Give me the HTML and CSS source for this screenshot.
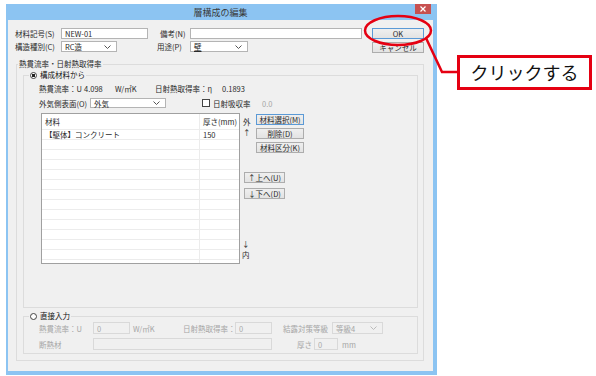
FILE: index.html
```html
<!DOCTYPE html>
<html lang="ja">

<head>
  <meta charset="UTF-8">
  <title>層構成の編集</title>
  <link rel="stylesheet" href="styles.css">
</head>

<body>
  <div class="window">
    <div class="titlebar">
      <span class="title">層構成の編集</span>
      <span class="close">
        <svg width="6" height="6" viewBox="0 0 6 6"><path d="M0.5 0.5L5.5 5.5M5.5 0.5L0.5 5.5" stroke="#fff" stroke-width="1.2"/></svg>
      </span>
    </div>

    <div class="client">
      <div class="top">
        <div class="fields">
          <div class="row">
            <span class="lbl w46">材料記号(S)</span>
            <input class="text w87" type="text" value="NEW-01">
            <span class="lbl w30 ml12">備考(N)</span>
            <input class="text w172" type="text" value="">
          </div>
          <div class="row">
            <span class="lbl w46">構造種別(C)</span>
            <span class="combo w56">RC造<svg class="chev" width="7" height="4" viewBox="0 0 7 4"><path d="M0.5 0.5L3.5 3.5L6.5 0.5" fill="none" stroke="#555"/></svg></span>
            <span class="lbl w33 ml40">用途(P)</span>
            <span class="combo w58"><u>壁</u><svg class="chev" width="7" height="4" viewBox="0 0 7 4"><path d="M0.5 0.5L3.5 3.5L6.5 0.5" fill="none" stroke="#555"/></svg></span>
          </div>
        </div>
        <div class="cmds">
          <button class="btn default">OK</button>
          <button class="btn">キャンセル</button>
        </div>
      </div>

      <fieldset class="group outer">
        <legend>熱貫流率・日射熱取得率</legend>
        <div class="outer-body">

          <fieldset class="group inner">
            <legend><span class="radio checked"></span>構成材料から</legend>
            <div class="inner-body first">
              <div class="row r10">
                <span class="w45">熱貫流率：U</span>
                <span class="w31">4.098</span>
                <span class="w40">W/㎡K</span>
                <span class="w67">日射熱取得率：η</span>
                <span>0.1893</span>
              </div>
              <div class="row r10 mt5">
                <span class="w51">外気側表面(O)</span>
                <span class="combo w76">外気<svg class="chev" width="7" height="4" viewBox="0 0 7 4"><path d="M0.5 0.5L3.5 3.5L6.5 0.5" fill="none" stroke="#555"/></svg></span>
                <span class="check"></span>
                <span class="w49">日射吸収率</span>
                <span class="off">0.0</span>
              </div>

              <div class="layers">
                <div class="list">
                  <div class="list-row head"><span>材料</span><span>厚さ(mm)</span></div>
                  <div class="list-row"><span>【駆体】コンクリート</span><span>150</span></div>
                  <div class="list-row"><span></span><span></span></div>
                  <div class="list-row"><span></span><span></span></div>
                  <div class="list-row"><span></span><span></span></div>
                  <div class="list-row"><span></span><span></span></div>
                  <div class="list-row"><span></span><span></span></div>
                  <div class="list-row"><span></span><span></span></div>
                  <div class="list-row"><span></span><span></span></div>
                  <div class="list-row"><span></span><span></span></div>
                  <div class="list-row"><span></span><span></span></div>
                  <div class="list-row"><span></span><span></span></div>
                  <div class="list-row"><span></span><span></span></div>
                  <div class="list-row"><span></span><span></span></div>
                  <div class="list-row"><span></span><span></span></div>
                </div>

                <div class="side">
                  <div class="side-top">
                    <div class="dir">外<br>↑</div>
                    <div class="stack">
                      <button class="btn w48 focus">材料選択(M)</button>
                      <button class="btn w48">削除(D)</button>
                      <button class="btn w48">材料区分(K)</button>
                    </div>
                  </div>
                  <button class="btn w41 move up">↑上へ(U)</button>
                  <button class="btn w41 move">↓下へ(D)</button>
                  <div class="dir bottom">↓<br>内</div>
                </div>
              </div>
            </div>
          </fieldset>

          <fieldset class="group inner second">
            <legend><span class="radio"></span>直接入力</legend>
            <div class="inner-body off">
              <div class="row r12">
                <span class="w54">熱貫流率：U</span>
                <input class="text w37 dis" type="text" value="0" disabled>
                <span class="w50 ml3">W/㎡K</span>
                <span class="w52">日射熱取得率：</span>
                <input class="text w37 dis" type="text" value="0" disabled>
                <span class="w49 ml11">結露対策等級</span>
                <span class="combo w51 dis">等級4<svg class="chev" width="7" height="4" viewBox="0 0 7 4"><path d="M0.5 0.5L3.5 3.5L6.5 0.5" fill="none" stroke="#bbb"/></svg></span>
              </div>
              <div class="row r12 mt4">
                <span class="w54">断熱材</span>
                <input class="text w179 dis" type="text" value="" disabled>
                <span class="w17 ml25">厚さ</span>
                <input class="text w24 dis" type="text" value="0" disabled>
                <span class="ml4">mm</span>
              </div>
            </div>
          </fieldset>

        </div>
      </fieldset>
    </div>
  </div>

  <svg class="callout-line" width="596" height="376" viewBox="0 0 596 376">
    <ellipse cx="398" cy="30.5" rx="33" ry="14.5" fill="none" stroke="#e50012" stroke-width="2.5"/>
    <path d="M426 38L442 72L458 72" fill="none" stroke="#e50012" stroke-width="2.5"/>
  </svg>
  <div class="callout">クリックする</div>
</body>

</html>
```

FILE: styles.css
```css
* {
  box-sizing: border-box;
}

body {
  margin: 0;
  width: 596px;
  height: 376px;
  overflow: hidden;
  position: relative;
  background: #fff;
  font-family: "Noto Sans CJK JP", "Noto Sans", sans-serif;
  font-size: 7.5px;
  color: #2a2a2a;
}

.window {
  margin: 4px 0 0 6px;
  width: 431px;
  height: 371px;
  background: #8cc4f2;
  padding: 0 4px 4px 2px;
  display: flex;
  flex-direction: column;
}

.titlebar {
  height: 16px;
  display: grid;
  grid-template-columns: 1fr auto 1fr;
  align-items: center;
}

.title {
  grid-column: 2;
  font-size: 9px;
  color: #3a3a3a;
}

.close {
  justify-self: end;
  align-self: start;
  width: 16px;
  height: 10px;
  margin-right: 2px;
  background: #c75050;
  display: flex;
  justify-content: center;
  align-items: center;
}

.client {
  flex: 1;
  background: #f0f0f0;
  padding: 8px 9px 0 7px;
}

.top {
  display: flex;
  align-items: flex-start;
}

.fields {
  width: 347px;
  display: flex;
  flex-direction: column;
  gap: 2px;
}

.row {
  display: flex;
  align-items: center;
  height: 11px;
  white-space: nowrap;
}

.r10 { height: 10px; }
.r12 { height: 12px; }
.mt4 { margin-top: 4px; }
.mt5 { margin-top: 5px; }
.ml3 { margin-left: 3px; }
.ml4 { margin-left: 4px; }
.ml11 { margin-left: 11px; }
.ml12 { margin-left: 12px; }
.ml25 { margin-left: 25px; }
.ml40 { margin-left: 40px; }

.w17 { width: 17px; }
.w24 { width: 24px; }
.w30 { width: 30px; }
.w31 { width: 31px; }
.w33 { width: 33px; }
.w37 { width: 37px; }
.w40 { width: 40px; }
.w41 { width: 41px; }
.w45 { width: 45px; }
.w46 { width: 46px; }
.w48 { width: 48px; }
.w49 { width: 49px; }
.w50 { width: 50px; }
.w51 { width: 51px; }
.w52 { width: 52px; }
.w54 { width: 54px; }
.w56 { width: 56px; }
.w58 { width: 58px; }
.w67 { width: 67px; }
.w76 { width: 76px; }
.w87 { width: 87px; }
.w172 { width: 172px; }
.w179 { width: 179px; }

.lbl {
  flex: none;
}

.row > span,
.row > input {
  flex: none;
}

.text {
  height: 11px;
  margin: 0;
  padding: 0 3px;
  border: 1px solid #b4b4b4;
  background: #fff;
  font: inherit;
  line-height: 9px;
  color: #2a2a2a;
  outline: none;
}

.r12 .text {
  height: 12px;
}

.text.dis {
  background: #f0f0f0;
  border-color: #d9d9d9;
  color: #aaa;
}

.combo {
  height: 11px;
  border: 1px solid #b4b4b4;
  background: #fff;
  padding: 0 5px 0 3px;
  display: flex;
  align-items: center;
  justify-content: space-between;
  line-height: 9px;
}

.r10 .combo {
  height: 10px;
}

.r12 .combo {
  height: 12px;
}

.combo.dis {
  background: #f0f0f0;
  border-color: #d9d9d9;
}

.cmds {
  margin-left: 10px;
  display: flex;
  flex-direction: column;
  gap: 3px;
}

.btn {
  height: 11px;
  width: 52px;
  margin: 0;
  padding: 0;
  border: 1px solid #adadad;
  background: linear-gradient(#efefef, #e3e3e3);
  font: inherit;
  line-height: 9px;
  color: #2a2a2a;
  white-space: nowrap;
  overflow: hidden;
}

.btn.default,
.btn.focus {
  border-color: #5b9ad6;
}

.btn.w41 { width: 41px; }
.btn.w48 { width: 48px; }

.group {
  margin: 0;
  padding: 0;
  min-width: 0;
  border: 1px solid #dcdcdc;
}

.group legend {
  padding: 0 1px;
  height: 8px;
  line-height: 8px;
  white-space: nowrap;
  display: flex;
  align-items: center;
}

.outer {
  margin: 7px 0 0 1px;
}

.outer legend {
  margin-left: 1px;
}

.outer-body {
  padding: 3px 5px 6px 6px;
}

.inner legend {
  margin-left: 5px;
  color: #111;
}

.inner.second {
  margin-top: 4px;
}

.inner-body {
  padding: 2px 0 3px 15px;
}

.inner-body.first {
  padding: 4px 0 43px 15px;
}

.radio {
  width: 7px;
  height: 7px;
  margin-right: 3px;
  border: 1px solid #444;
  border-radius: 50%;
  background: #fff;
}

.radio.checked {
  background: radial-gradient(circle, #222 0 1.6px, #fff 2px);
}

.check {
  width: 8px;
  height: 8px;
  margin-left: 36px;
  margin-right: 3px;
  border: 1px solid #444;
  background: #fff;
}

.off {
  color: #a6a6a6;
}

.layers {
  margin: 5px 0 0 2px;
  display: flex;
}

.list {
  width: 199px;
  height: 151px;
  border: 1px solid #a0a0a0;
  background: #fff;
  overflow: hidden;
}

.list-row {
  display: grid;
  grid-template-columns: 158px 1fr;
  height: 10px;
  border-bottom: 1px solid #ececec;
  line-height: 9px;
}

.list-row.head {
  height: 16px;
  line-height: 15px;
}

.list-row span {
  padding-left: 3px;
  white-space: nowrap;
}

.list-row span:first-child {
  border-right: 1px solid #ececec;
}

.side {
  width: 70px;
  display: flex;
  flex-direction: column;
  align-items: flex-start;
  padding-bottom: 4px;
}

.side-top {
  display: flex;
  margin-top: 1px;
}

.dir {
  width: 16px;
  padding: 2px 0 0 3px;
  line-height: 11px;
}

.stack {
  display: flex;
  flex-direction: column;
  gap: 3px;
}

.move {
  margin: 5px 0 0 4px;
}

.move.up {
  margin-top: 19px;
}

.dir.bottom {
  margin-top: auto;
  padding: 0 0 0 2px;
}

.callout-line {
  position: absolute;
  left: 0;
  top: 0;
  pointer-events: none;
}

.callout {
  position: absolute;
  left: 457px;
  top: 55px;
  width: 135px;
  height: 35px;
  border: 3px solid #e50012;
  background: #fff;
  font-size: 18px;
  line-height: 29px;
  text-align: center;
  color: #111;
}
```
